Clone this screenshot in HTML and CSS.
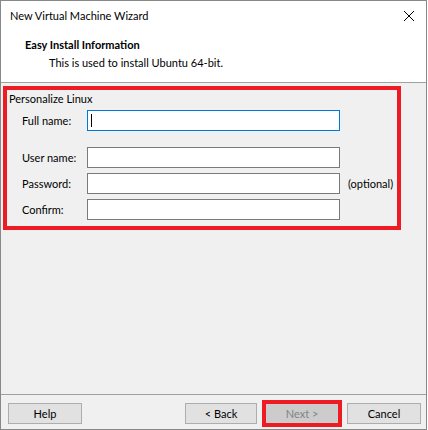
FILE: index.html
```html
<!DOCTYPE html>
<html>
<head>
<meta charset="utf-8">
<link rel="stylesheet" href="styles.css">
</head>
<body>
<div class="window">
  <div class="titlebar">
    <span class="title">New Virtual Machine Wizard</span>
    <svg class="close" width="12" height="12" viewBox="0 0 12 12"><path d="M1 1 L11 11 M11 1 L1 11" stroke="#000" stroke-width="1" fill="none"/></svg>
  </div>
  <div class="header">
    <div class="h-title">Easy Install Information</div>
    <div class="h-sub">This is used to install Ubuntu 64-bit.</div>
  </div>
  <div class="content">
    <div class="group">
      <div class="group-label">Personalize Linux</div>
      <div class="form">
        <div class="row">
          <label class="lbl">Full name:</label>
          <div class="input focus"><span class="caret"></span></div>
        </div>
        <div class="row first-after">
          <label class="lbl">User name:</label>
          <div class="input"></div>
        </div>
        <div class="row">
          <label class="lbl">Password:</label>
          <div class="input"></div>
          <span class="opt">(optional)</span>
        </div>
        <div class="row">
          <label class="lbl">Confirm:</label>
          <div class="input"></div>
        </div>
      </div>
    </div>
  </div>
  <div class="footer">
    <button class="btn">Help</button>
    <div class="spacer"></div>
    <button class="btn back">&lt; Back</button>
    <button class="btn disabled">Next &gt;</button>
    <button class="btn">Cancel</button>
  </div>
</div>
</body>
</html>
```
FILE: styles.css
```css
html, body {
  margin: 0;
  padding: 0;
  background: #ffffff;
}
body {
  font-family: "Lato", "Liberation Sans", sans-serif;
  font-size: 11px;
  color: #000;
}
.window {
  width: 427px;
  height: 430px;
  box-sizing: border-box;
  border: 1px solid #888888;
  display: flex;
  flex-direction: column;
  background: #f0f0f0;
}
.titlebar {
  height: 29px;
  background: #fff;
  display: flex;
  align-items: center;
  justify-content: space-between;
  padding: 0 11px 0 9px;
}
.title {
  font-size: 11px;
}
.close {
  display: block;
}
.header {
  height: 53px;
  background: #fff;
  box-sizing: border-box;
  padding: 7px 0 0 24px;
  border-bottom: 1px solid #a0a0a0;
}
.h-title {
  font-weight: bold;
  line-height: 16px;
}
.h-sub {
  padding-left: 24px;
  line-height: 16px;
  margin-top: 2px;
}
.content {
  flex: 1;
  padding: 3px 0 0 2px;
  border-bottom: 1px solid #a0a0a0;
}
.group {
  width: 398px;
  height: 144px;
  box-sizing: border-box;
  border: 4px solid #ed1c24;
  padding: 2px 0 0 2px;
}
.group-label {
  line-height: 14px;
}
.form {
  display: flex;
  flex-direction: column;
  gap: 5px;
  margin: 4px 0 0 13px;
}
.row {
  display: flex;
  align-items: center;
  height: 21px;
}
.row.first-after {
  margin-top: 11px;
}
.lbl {
  width: 65px;
  flex: none;
}
.input {
  width: 253px;
  height: 21px;
  flex: none;
  box-sizing: border-box;
  border: 1px solid #7a7a7a;
  background: #fff;
  position: relative;
}
.input.focus {
  border-color: #0078d7;
}
.caret {
  position: absolute;
  left: 3px;
  top: 3px;
  width: 1px;
  height: 13px;
  background: #000;
}
.opt {
  padding-left: 8px;
  white-space: nowrap;
}
.footer {
  height: 34px;
  display: flex;
  align-items: flex-start;
  padding: 8px 5px 0 7px;
  box-sizing: border-box;
  gap: 8px;
}
.spacer {
  flex: 1;
}
.btn {
  width: 74px;
  height: 21px;
  box-sizing: border-box;
  border: 1px solid #adadad;
  background: #e1e1e1;
  font-family: inherit;
  font-size: 11px;
  color: #000;
  padding: 0;
  margin: 0;
}
.btn.back {
  width: 72px;
}
.btn.disabled {
  color: #838383;
  background: #cccccc;
  border-color: #bfbfbf;
  outline: 4px solid #ed1c24;
  outline-offset: -1px;
}
```
